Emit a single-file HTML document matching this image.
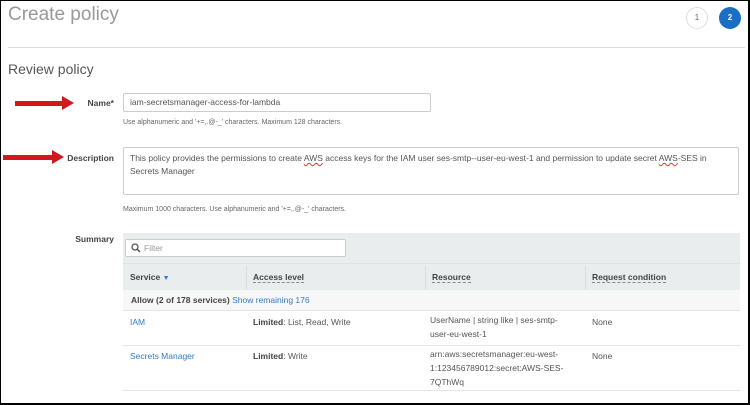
<!DOCTYPE html>
<html><head><style>
*{margin:0;padding:0;box-sizing:border-box}
body{width:750px;height:405px;overflow:hidden;background:#fff;font-family:"Liberation Sans",Arial,sans-serif;position:relative}
.frame{position:absolute;left:0;top:0;width:750px;height:405px;border:1px solid #000;border-bottom-width:2px;border-right-width:2px}
.a{position:absolute}
.lbl{font-size:8.5px;font-weight:bold;color:#444;text-align:right;width:100px}
.help{font-size:7px;color:#666}
.t{font-size:8.5px;color:#555;line-height:11px}
.lnk{color:#2f7bc8}
.th{font-size:8.5px;font-weight:bold;color:#444}
.th span{border-bottom:1px dashed #888}
.arrow{position:absolute;height:5px;background:#d0191f}
.arrow:after{content:"";position:absolute;right:-10px;top:-5px;border-left:12px solid #d0191f;border-top:7.5px solid transparent;border-bottom:7.5px solid transparent}
.u{text-decoration:underline wavy #e33;text-decoration-thickness:1px}
</style></head><body>
<div class="a" style="left:8px;top:4px;font-size:19px;color:#999">Create policy</div>
<div class="a" style="left:686px;top:7px;width:22px;height:22px;border:1px solid #ddd;border-radius:50%;font-size:8px;color:#666;text-align:center;line-height:20px">1</div>
<div class="a" style="left:719px;top:7px;width:22px;height:22px;background:#1a6ec4;border-radius:50%;font-size:8px;color:#fff;font-weight:bold;text-align:center;line-height:22px">2</div>
<div class="a" style="left:8px;top:47px;width:737px;height:1px;background:#ddd"></div>
<div class="a" style="left:8px;top:61px;font-size:14px;color:#555">Review policy</div>

<div class="arrow" style="left:15px;top:101px;width:49px"></div>
<div class="a lbl" style="left:14px;top:98px">Name*</div>
<div class="a" style="left:123px;top:93px;width:308px;height:19px;border:1px solid #ccc;border-radius:2px"></div>
<div class="a t" style="left:130px;top:97px">iam-secretsmanager-access-for-lambda</div>
<div class="a help" style="left:123px;top:119px">Use alphanumeric and '+=,.@-_' characters. Maximum 128 characters.</div>

<div class="arrow" style="left:3px;top:155px;width:51px"></div>
<div class="a lbl" style="left:14px;top:153px">Description</div>
<div class="a" style="left:123px;top:147px;width:616px;height:48px;border:1px solid #ccc;border-radius:2px"></div>
<div class="a t" style="left:130px;top:152px;width:600px;line-height:13px">This policy provides the permissions to create <span class="u">AWS</span> access keys for the IAM user ses-smtp--user-eu-west-1 and permission to update secret <span class="u">AWS</span>-SES in Secrets Manager</div>
<div class="a help" style="left:123px;top:206px">Maximum 1000 characters. Use alphanumeric and '+=,.@-_' characters.</div>

<div class="a lbl" style="left:14px;top:234px">Summary</div>
<div class="a" style="left:123px;top:233px;width:617px;height:57px;background:#eaeded"></div>
<div class="a" style="left:125px;top:239px;width:221px;height:18px;background:#fff;border:1px solid #ccc;border-radius:2px"></div>
<svg class="a" style="left:131px;top:243px" width="10" height="10" viewBox="0 0 10 10"><circle cx="4" cy="4" r="3" fill="none" stroke="#555" stroke-width="1.3"/><path d="M6 6 L9 9" stroke="#555" stroke-width="1.5"/></svg>
<div class="a" style="left:144px;top:243px;font-size:8.5px;color:#999">Filter</div>
<div class="a" style="left:123px;top:263px;width:617px;height:1px;background:#dfe2e2"></div>
<div class="a" style="left:246px;top:266px;width:1px;height:24px;background:#ddd"></div>
<div class="a" style="left:425px;top:266px;width:1px;height:24px;background:#ddd"></div>
<div class="a" style="left:585px;top:266px;width:1px;height:24px;background:#ddd"></div>
<div class="a th" style="left:130px;top:272px">Service <span style="border:none;color:#2f7bc8;font-size:7px">▼</span></div>
<div class="a th" style="left:253px;top:272px"><span>Access level</span></div>
<div class="a th" style="left:432px;top:272px"><span>Resource</span></div>
<div class="a th" style="left:592px;top:272px"><span>Request condition</span></div>
<div class="a" style="left:123px;top:290px;width:617px;height:21px;background:#f7f7f7;border-bottom:1px solid #e5e5e5"></div>
<div class="a" style="left:131px;top:295px;font-size:8.5px;font-weight:bold;color:#444">Allow (2 of 178 services) <span class="lnk" style="font-weight:normal">Show remaining 176</span></div>

<div class="a t lnk" style="left:130px;top:317px">IAM</div>
<div class="a t" style="left:253px;top:317px"><b style="color:#444">Limited</b>: List, Read, Write</div>
<div class="a t" style="left:430px;top:313px;line-height:14px;width:150px">UserName | string like | ses-smtp-<br>user-eu-west-1</div>
<div class="a t" style="left:592px;top:317px">None</div>
<div class="a" style="left:123px;top:345px;width:617px;height:1px;background:#e5e5e5"></div>
<div class="a t lnk" style="left:130px;top:351px">Secrets Manager</div>
<div class="a t" style="left:253px;top:351px"><b style="color:#444">Limited</b>: Write</div>
<div class="a t" style="left:430px;top:347px;line-height:14px;width:150px">arn:aws:secretsmanager:eu-west-<br>1:123456789012:secret:AWS-SES-<br>7QThWq</div>
<div class="a t" style="left:592px;top:351px">None</div>
<div class="a" style="left:123px;top:390px;width:617px;height:1px;background:#e5e5e5"></div>
<div class="frame"></div>
</body></html>
